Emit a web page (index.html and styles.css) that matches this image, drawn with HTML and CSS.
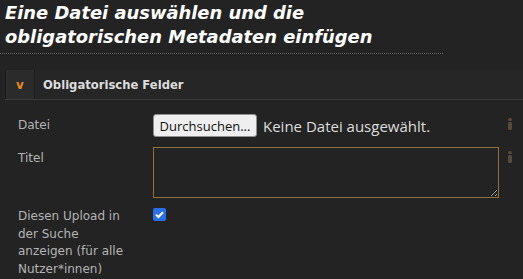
FILE: index.html
```html
<!DOCTYPE html>
<html lang="de">
<head>
<meta charset="utf-8">
<title>Upload</title>
<link rel="stylesheet" href="styles.css">
</head>
<body>
<h2 class="title">Eine Datei auswählen und die obligatorischen Metadaten einfügen</h2>

<div class="panel">
  <div class="panel-head">
    <span class="toggle">v</span>
    <span class="panel-title">Obligatorische Felder</span>
  </div>

  <div class="form">
    <div class="row">
      <label class="lbl">Datei</label>
      <div class="field filepick">
        <span class="btn">Durchsuchen...</span>
        <span class="nofile">Keine Datei ausgewählt.</span>
      </div>
      <span class="info"><svg width="6" height="13" viewBox="0 0 6 13"><rect x="1" y="0" width="4" height="3" rx="1.5"/><rect x="1" y="4" width="4" height="8" rx="1.5"/></svg></span>
    </div>

    <div class="row">
      <label class="lbl">Titel</label>
      <div class="field"><textarea class="area"></textarea></div>
      <span class="info"><svg width="6" height="13" viewBox="0 0 6 13"><rect x="1" y="0" width="4" height="3" rx="1.5"/><rect x="1" y="4" width="4" height="8" rx="1.5"/></svg></span>
    </div>

    <div class="row">
      <label class="lbl wrap">Diesen Upload in der Suche anzeigen (für alle Nutzer*innen)</label>
      <div class="field">
        <span class="check"><svg width="13" height="13" viewBox="0 0 13 13"><path d="M3 6.6 L5.4 9 L10 4.2" fill="none" stroke="#fff" stroke-width="2"/></svg></span>
      </div>
      <span></span>
    </div>
  </div>
</div>
</body>
</html>
```

FILE: styles.css
```css
body { margin: 0; background-color: #232323; color: #bbb; font-family: "DejaVu Sans", Verdana, sans-serif; }

.title { margin: 0; width: 438px; padding: 1px 0 4px 5px; font-size: 17.9px; line-height: 24px; font-style: italic; font-weight: bold; color: #fff; border-bottom: 1px dotted #666; }

.panel { margin: 16px 0 0 5px; }
.panel-head { display: flex; align-items: center; height: 29px; background-color: #262626; border-bottom: 1px solid #3a3a3a; }
.toggle { width: 28px; height: 29px; display: flex; align-items: center; justify-content: center; background-color: #2b2b2b; border-right: 1px solid #1c1c1c; border-left: 1px solid #1c1c1c; color: #e8891c; font-weight: bold; font-size: 12px; }
.panel-title { margin-left: 8px; font-size: 11.6px; font-weight: bold; color: #ddd; }

.form { padding: 14px 0 0 13px; }
.row { display: grid; grid-template-columns: 135px 346px 1fr; margin-bottom: 10px; }
.lbl { font-size: 12px; line-height: 17.5px; color: #b4b4b4; padding-top: 3px; }
.lbl.wrap { padding-right: 23px; padding-top: 0; }

.filepick { display: flex; align-items: center; gap: 6px; font-family: "Open Sans", sans-serif; font-size: 13px; }
.btn { height: 23px; width: 104px; box-sizing: border-box; display: flex; align-items: center; justify-content: center; background-color: #efefef; color: #111; border: 1px solid #8f8f8f; border-radius: 3px; }
.nofile { color: #ddd; font-size: 15px; }

.area { display: block; width: 346px; height: 51px; box-sizing: border-box; margin: 0; background-color: #232323; border: 1px solid #94703a; border-radius: 0; }

.info { padding: 2px 0 0 8px; }
.info svg { fill: #574a38; }

.check { display: block; width: 13px; height: 13px; background-color: #2a6fe8; border-radius: 2px; }
.check svg { display: block; }
```
